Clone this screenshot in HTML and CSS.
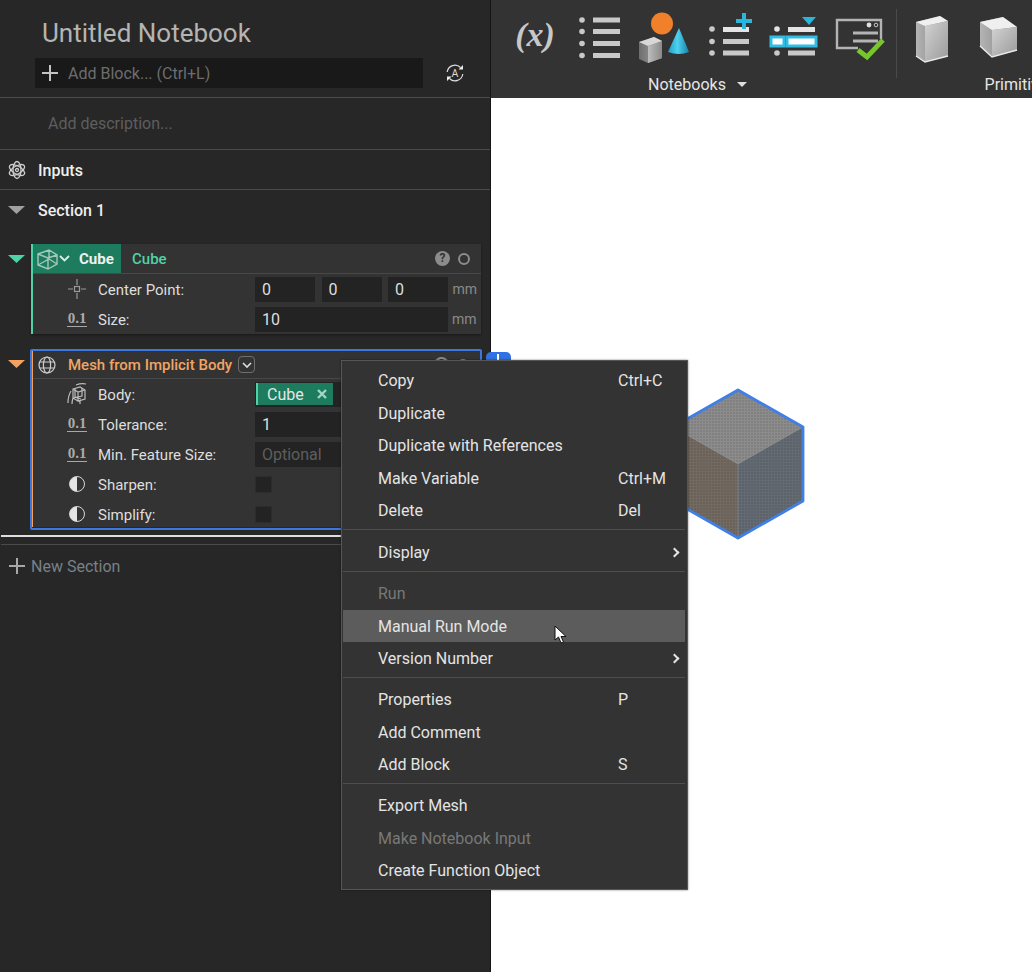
FILE: index.html
```html
<!DOCTYPE html>
<html lang="en">
  <head>
    <meta charset="UTF-8" />
    <meta name="viewport" content="width=device-width, initial-scale=1.0" />
    <title>Untitled Notebook</title>
    <link rel="stylesheet" href="styles.css">
  </head>
  <body>
    <div class="app">
      <aside class="sidebar">
        <header class="nb-header">
          <h1 class="nb-title">Untitled Notebook</h1>
          <div class="add-row">
            <div class="add-bar">
              <svg class="add-plus" width="16" height="16" viewBox="0 0 16 16"><path d="M8 0v16M0 8h16" stroke="#c4c4c4" stroke-width="2"/></svg>
              <span>Add Block... (Ctrl+L)</span>
            </div>
            <svg class="auto-icon" width="20" height="20" viewBox="0 0 20 20" fill="none" stroke="#dcdcdc" stroke-width="1.200">
              <path d="M2.200 9A7.800 7.800 0 0 1 15.500 4.500M17.800 11A7.800 7.800 0 0 1 4.500 15.500"/>
              <path d="M18 2v4.500h-4.500zM2 18v-4.500h4.500z" fill="#eee" stroke="none"/>
              <text x="10" y="14" text-anchor="middle" class="auto-letter">A</text>
            </svg>
          </div>
        </header>
        <div class="nb-desc">Add description...</div>
        <div class="nb-inputs">
          <svg class="inputs-icon" width="18" height="20" viewBox="0 0 18 20" fill="none" stroke="#cfcfcf" stroke-width="1.300">
            <ellipse cx="9" cy="10" rx="8.500" ry="4" transform="rotate(30 9 10)"/>
            <ellipse cx="9" cy="10" rx="8.500" ry="4" transform="rotate(90 9 10)"/>
            <ellipse cx="9" cy="10" rx="8.500" ry="4" transform="rotate(150 9 10)"/>
            <circle cx="9" cy="10" r="1.500"/>
          </svg>
          <span>Inputs</span>
        </div>
        <div class="section-row">
          <span class="tri tri-gray"></span>
          <span>Section 1</span>
        </div>

        <div class="block-wrap cube-wrap">
          <span class="tri tri-teal"></span>
          <div class="block block-cube">
            <div class="block-head">
              <div class="cube-tab">
                <svg width="21" height="22" viewBox="0 0 21 22" fill="none" stroke="#a6c8b9" stroke-width="1.400">
                  <path d="M1 6l11-4 8 5v9l-9 5-10-4zM1 6l10 4 9-3M11 10v11M12 2v9M1 17l11-6 8 5"/>
                </svg>
                <svg class="chev" width="11" height="7" viewBox="0 0 11 7" fill="none" stroke="#e6e6e6" stroke-width="1.800"><path d="M1 1l4.500 4.500L10 1"/></svg>
                <span>Cube</span>
              </div>
              <span class="block-name">Cube</span>
              <div class="head-icons">
                <span class="help">?</span>
                <span class="ring"></span>
              </div>
            </div>
            <div class="row">
              <svg class="row-icon" width="20" height="20" viewBox="0 0 20 20" fill="none" stroke="#9a9a9a" stroke-width="1.200"><rect x="7.500" y="7.500" width="5" height="5"/><path d="M10 0v6M10 14v6M1 10h5M14 10h5"/></svg>
              <label>Center Point:</label>
              <div class="field">0</div>
              <div class="field">0</div>
              <div class="field">0</div>
              <span class="unit">mm</span>
            </div>
            <div class="row">
              <span class="num-icon">0.1</span>
              <label>Size:</label>
              <div class="field field-wide">10</div>
              <span class="unit">mm</span>
            </div>
          </div>
        </div>

        <div class="block-wrap mesh-wrap">
          <span class="tri tri-orange"></span>
          <div class="block-outline">
            <div class="block block-mesh">
              <div class="block-head mesh-head">
                <svg class="globe" width="18" height="18" viewBox="0 0 18 18" fill="none" stroke="#cfcfcf" stroke-width="1.200">
                  <circle cx="9" cy="9" r="8"/>
                  <ellipse cx="9" cy="9" rx="3.600" ry="8"/>
                  <path d="M1.800 6h14.400M1.800 12h14.400"/>
                </svg>
                <span class="mesh-title">Mesh from Implicit Body</span>
                <span class="mesh-toggle">
                  <svg width="10" height="6" viewBox="0 0 10 6" fill="none" stroke="#e0e0e0" stroke-width="1.600"><path d="M1 1l4 4 4-4"/></svg>
                </span>
                <div class="head-icons">
                  <span class="help">?</span>
                  <span class="ring"></span>
                </div>
              </div>
              <div class="row">
                <svg class="row-icon" width="20" height="22" viewBox="0 0 20 22" fill="none" stroke="#bcbcbc" stroke-width="1.200"><path d="M6 6l7-2 5 3v9l-7 2-5-3zM6 6l5 3 7-2M11 9v9M9 2q5-2 10-1M4 8Q1 13 1 20M6 15q-1 3-1 6M13 18v3"/><path d="M8 5v9l6 2M15 5v8l-9 2"/></svg>
                <label>Body:</label>
                <div class="field field-wide">
                  <span class="chip">Cube
                    <svg width="10" height="10" viewBox="0 0 10 10" fill="none" stroke="#9fd8c2" stroke-width="2.400"><path d="M1 1l8 8M9 1l-8 8"/></svg>
                  </span>
                </div>
              </div>
              <div class="row">
                <span class="num-icon">0.1</span>
                <label>Tolerance:</label>
                <div class="field field-wide">1</div>
              </div>
              <div class="row">
                <span class="num-icon">0.1</span>
                <label>Min. Feature Size:</label>
                <div class="field field-wide field-empty">Optional</div>
              </div>
              <div class="row">
                <span class="half-icon"></span>
                <label>Sharpen:</label>
                <span class="check"></span>
              </div>
              <div class="row row-last">
                <span class="half-icon"></span>
                <label>Simplify:</label>
                <span class="check"></span>
              </div>
            </div>
          </div>
          <span class="block-add"><span></span></span>
        </div>

        <div class="end-line"></div>
        <div class="new-section">
          <svg width="16" height="16" viewBox="0 0 16 16"><path d="M8 0v16M0 8h16" stroke="#a8a8a8" stroke-width="2"/></svg>
          <span>New Section</span>
        </div>
      </aside>

      <main class="main">
        <div class="toolbar">
          <div class="tool-group tool-group-notebooks">
            <div class="tool-icons">
              <span class="tool-var">(x)</span>
              <svg width="70" height="64" viewBox="0 0 70 64" fill="#c9c9c9">
                <circle cx="22" cy="12" r="2.800"/><circle cx="22" cy="23.500" r="2.800"/><circle cx="22" cy="35.500" r="2.800"/><circle cx="22" cy="47.500" r="2.800"/>
                <rect x="33" y="9.500" width="27" height="5"/><rect x="33" y="21" width="27" height="5"/><rect x="33" y="33" width="27" height="5"/><rect x="33" y="45" width="27" height="5"/>
              </svg>
              <svg width="65" height="64" viewBox="0 0 65 64">
                <defs>
                  <linearGradient id="coneFill" x1="0" x2="1" y1="0" y2="0"><stop offset="0" stop-color="#1a9fc9"/><stop offset="0.45" stop-color="#4fd0ee"/><stop offset="1" stop-color="#1582aa"/></linearGradient>
                  <linearGradient id="cubeLeft" x1="0" x2="1" y1="0" y2="0"><stop offset="0" stop-color="#6e6e6e"/><stop offset="1" stop-color="#a9a9a9"/></linearGradient>
                  <linearGradient id="cubeRight" x1="0" x2="1" y1="0" y2="0"><stop offset="0" stop-color="#bdbdbd"/><stop offset="1" stop-color="#8a8a8a"/></linearGradient>
                </defs>
                <circle cx="32" cy="15.500" r="11" fill="#f08029"/>
                <path d="M49 20L38 44q11 4 21 0z" fill="url(#coneFill)"/>
                <path d="M9 34l15-5 8 4v17l-14 5-9-4z" fill="url(#cubeLeft)"/>
                <path d="M9 34l15-5 8 4-14 5z" fill="#d8d8d8"/>
                <path d="M18 38l14-5v17l-14 5z" fill="url(#cubeRight)"/>
              </svg>
              <svg width="70" height="64" viewBox="0 0 70 64" fill="#c9c9c9">
                <circle cx="17" cy="21" r="2.800"/><circle cx="17" cy="33.500" r="2.800"/><circle cx="17" cy="45" r="2.800"/>
                <rect x="28" y="19" width="26" height="5" fill="#e4e4e4"/><rect x="28" y="31" width="26" height="5"/><rect x="28" y="42.500" width="26" height="5"/>
                <path d="M49 5v16M41 13h16" stroke="#29b5dc" stroke-width="4"/>
              </svg>
              <svg width="65" height="64" viewBox="0 0 65 64" fill="#c9c9c9">
                <circle cx="12" cy="21" r="2.800" fill="#e4e4e4"/><circle cx="12" cy="45" r="2.800"/>
                <rect x="23" y="19" width="27" height="5" fill="#e4e4e4"/><rect x="23" y="42.500" width="27" height="5"/>
                <rect x="6" y="29" width="13" height="9" fill="#fff" stroke="#2fbde4" stroke-width="3"/>
                <rect x="22" y="29" width="29" height="9" fill="#fff" stroke="#2fbde4" stroke-width="3"/>
                <path d="M37 9h14l-7 8z" fill="#29b5dc"/>
              </svg>
              <svg width="66" height="64" viewBox="0 0 66 64" fill="none">
                <path d="M28 40H7V12h44v19" stroke="#b4b4b4" stroke-width="2.400"/>
                <circle cx="39" cy="17" r="2.400" fill="#e0e0e0"/><circle cx="46" cy="17" r="1.800" stroke="#c8c8c8"/>
                <path d="M23 25h25M23 33h25" stroke="#b4b4b4" stroke-width="3"/>
                <path d="M28 42l9 7 16-17" stroke="#77c62c" stroke-width="4.800"/>
              </svg>
            </div>
            <div class="tool-label">Notebooks <span class="caret"></span></div>
          </div>
          <div class="tool-group tool-group-primitives">
            <div class="tool-icons">
              <svg width="68" height="64" viewBox="0 0 68 64">
                <defs>
                  <linearGradient id="boxFront" x1="0" x2="1" y1="0" y2="1"><stop offset="0" stop-color="#d2d2d2"/><stop offset="1" stop-color="#9a9a9a"/></linearGradient>
                  <linearGradient id="boxSide" x1="0" x2="1" y1="0" y2="0"><stop offset="0" stop-color="#b4b4b4"/><stop offset="1" stop-color="#7a7a7a"/></linearGradient>
                </defs>
                <path d="M20 14l24-6 8 5v35l-23 6-9-6z" fill="url(#boxSide)"/>
                <path d="M20 14l24-6 8 5-23 5z" fill="#efefef"/>
                <path d="M29 18l23-5v35l-23 6z" fill="url(#boxFront)"/>
                <path d="M20 48l9 6 23-6" fill="none" stroke="#e8e8e8" stroke-width="1.500"/>
              </svg>
              <svg width="68" height="64" viewBox="0 0 68 64">
                <path d="M16 14l23-5 14 10v23l-25 7-12-11z" fill="url(#boxSide)"/>
                <path d="M16 14l23-5 14 10-25 3z" fill="#efefef"/>
                <path d="M28 22l25-3v23l-25 7z" fill="url(#boxFront)"/>
                <path d="M16 38l12 11 25-7" fill="none" stroke="#e8e8e8" stroke-width="1.500"/>
              </svg>
            </div>
            <div class="tool-label">Primitives <span class="caret"></span></div>
          </div>
        </div>

        <div class="viewport">
          <svg class="mesh-cube" width="140" height="158" viewBox="0 0 140 158">
            <defs>
              <pattern id="meshDots" width="3" height="3" patternUnits="userSpaceOnUse">
                <circle cx="1" cy="1" r="0.800" fill="#000" fill-opacity="0.180"/>
              </pattern>
            </defs>
            <path d="M68 5l65 37v74l-65 37-65-37V42z" fill="#8c8c8c"/>
            <path d="M3 42l65 37v74L3 116z" fill="#736b62"/>
            <path d="M133 42L68 79v74l65-37z" fill="#646b73"/>
            <path d="M68 5l65 37v74l-65 37-65-37V42z" fill="url(#meshDots)"/>
            <path d="M3 42l65 37 65-37M68 79v74" fill="none" stroke="#a8a8a8" stroke-opacity="0.400" stroke-width="1"/>
            <path d="M68 5l65 37v74l-65 37-65-37V42z" fill="none" stroke="#3f7fe6" stroke-width="2.800" stroke-linejoin="round"/>
          </svg>
        </div>
      </main>
    </div>

    <!-- Context menu -->
    <div class="menu">
      <div class="menu-item"><span class="menu-text">Copy</span><span>Ctrl+C</span></div>
      <div class="menu-item"><span class="menu-text">Duplicate</span></div>
      <div class="menu-item"><span class="menu-text">Duplicate with References</span></div>
      <div class="menu-item"><span class="menu-text">Make Variable</span><span>Ctrl+M</span></div>
      <div class="menu-item"><span class="menu-text">Delete</span><span>Del</span></div>
      <div class="menu-sep menu-sep-first"></div>
      <div class="menu-item menu-sub"><span class="menu-text">Display</span></div>
      <div class="menu-sep"></div>
      <div class="menu-item menu-off"><span class="menu-text">Run</span></div>
      <div class="menu-item menu-hover">
        <span class="menu-text">Manual Run Mode</span>
        <svg class="pointer" width="14" height="19" viewBox="0 0 14 19"><path d="M1 1v14l3.500-3 2.500 6 2.500-1-2.500-5.500H12z" fill="#fff" stroke="#111" stroke-width="1"/></svg>
      </div>
      <div class="menu-item menu-sub"><span class="menu-text">Version Number</span></div>
      <div class="menu-sep"></div>
      <div class="menu-item"><span class="menu-text">Properties</span><span>P</span></div>
      <div class="menu-item"><span class="menu-text">Add Comment</span></div>
      <div class="menu-item"><span class="menu-text">Add Block</span><span>S</span></div>
      <div class="menu-sep"></div>
      <div class="menu-item"><span class="menu-text">Export Mesh</span></div>
      <div class="menu-item menu-off"><span class="menu-text">Make Notebook Input</span></div>
      <div class="menu-item"><span class="menu-text">Create Function Object</span></div>
    </div>
  </body>
</html>
```

FILE: styles.css
```css
* {
  box-sizing: border-box;
}

html, body {
  margin: 0;
  height: 100%;
  overflow: hidden;
}

body {
  font-family: Roboto, "Liberation Sans", sans-serif;
  font-size: 16px;
  color: #e2e2e2;
  background-color: #fff;
}

.app {
  display: flex;
  height: 972px;
}

/* Left notebook panel */
.sidebar {
  width: 491px;
  flex-shrink: 0;
  background-color: #272727;
  border-right: 1px solid #141414;
}

.nb-header {
  height: 98px;
  padding: 18px 0 0 35px;
  border-bottom: 1px solid #4b4b4b;
}

.nb-title {
  margin: 0 0 10px 7px;
  font-size: 26px;
  line-height: 30px;
  font-weight: 400;
  color: #b4b4b4;
}

.add-row {
  display: flex;
  align-items: center;
}

.add-bar {
  display: flex;
  align-items: center;
  width: 388px;
  height: 30px;
  padding-left: 7px;
  background-color: #191919;
  color: #6d6d6d;
}

.add-plus {
  margin-right: 10px;
}

.auto-icon {
  margin-left: 22px;
}

.auto-letter {
  font-family: Roboto, sans-serif;
  font-size: 10.500px;
  fill: #dcdcdc;
  stroke: none;
}

.nb-desc {
  height: 52px;
  padding: 16px 0 0 48px;
  line-height: 20px;
  color: #5e5e5e;
  border-bottom: 1px solid #4b4b4b;
}

.nb-inputs {
  display: flex;
  align-items: center;
  height: 40px;
  padding-left: 8px;
  font-weight: 500;
  color: #eee;
  border-bottom: 1px solid #4b4b4b;
}

.nb-inputs span {
  margin-left: 12px;
  padding-top: 1px;
}

.section-row {
  display: flex;
  align-items: center;
  height: 40px;
  padding-left: 8px;
  font-weight: 500;
  color: #eee;
}

.section-row span:last-child {
  margin-left: 13px;
}

.tri {
  display: block;
  flex-shrink: 0;
  width: 17px;
  height: 8px;
  background-color: #a0a0a0;
  clip-path: polygon(0 0, 100% 0, 50% 100%);
}

.tri-teal {
  margin-top: 11px;
  background-color: #4fd2a6;
}

.tri-orange {
  margin-top: 11px;
  background-color: #f5a260;
}

/* Blocks */
.block-wrap {
  position: relative;
  display: flex;
  padding-left: 8px;
}

.cube-wrap {
  margin-top: 14px;
}

.mesh-wrap {
  margin-top: 15px;
}

.block {
  background-color: #333;
}

.block-cube {
  width: 450px;
  margin-left: 6px;
  border-left: 2px solid #4fd2a6;
  box-shadow: 0 1px 2px rgba(0, 0, 0, 0.4);
}

.block-outline {
  width: 452px;
  height: 181px;
  margin-left: 5px;
  border: 2px solid #3a78e0;
  border-radius: 2px;
}

.block-mesh {
  margin-left: 0;
  border-left: 1px solid #f5a260;
}

.block-head {
  display: flex;
  align-items: center;
  height: 30px;
  border-bottom: 1px solid #484848;
}

.mesh-head {
  height: 28px;
}

.cube-tab {
  display: flex;
  align-items: center;
  width: 88px;
  height: 29px;
  padding-left: 4px;
  background-color: #1d7c5e;
  font-size: 15px;
  font-weight: 700;
  color: #f0f0f0;
}

.cube-tab span,
.block-name {
  padding-top: 1px;
}

.chev {
  margin-left: 1px;
  margin-right: 9px;
}

.block-name {
  margin-left: 11px;
  font-size: 15px;
  font-weight: 500;
  color: #4fd2a6;
}

.head-icons {
  display: flex;
  align-items: center;
  gap: 8px;
  margin-left: auto;
  padding-right: 11px;
}

.help {
  width: 15px;
  height: 15px;
  border-radius: 50%;
  background-color: #8c8c8c;
  color: #333;
  font-size: 12px;
  font-weight: 700;
  line-height: 15px;
  text-align: center;
}

.ring {
  width: 12px;
  height: 12px;
  border: 2px solid #8c8c8c;
  border-radius: 50%;
}

.globe {
  margin-left: 5px;
  margin-right: 12px;
}

.mesh-title {
  font-size: 15px;
  font-weight: 500;
  color: #f0a564;
}

.mesh-toggle {
  display: flex;
  align-items: center;
  justify-content: center;
  width: 17px;
  height: 17px;
  margin-left: 6px;
  border: 1px solid #707070;
  border-radius: 4px;
}

.row {
  display: flex;
  align-items: center;
  height: 30px;
  padding-left: 34px;
}

.row-last {
  height: 28px;
  padding-top: 2px;
}

.row label {
  width: 157px;
  margin-left: 11px;
  padding-top: 1px;
  font-size: 15px;
  color: #dedede;
}

.row-icon {
  flex-shrink: 0;
}

.num-icon {
  width: 20px;
  border-bottom: 1px solid #a8a8a8;
  font-family: "Liberation Serif", serif;
  font-size: 15px;
  font-weight: 700;
  line-height: 15px;
  text-align: center;
  color: #aaa;
}

.half-icon {
  width: 16px;
  height: 16px;
  margin: 0 2px;
  border: 1px solid #d8d8d8;
  border-radius: 50%;
  background: linear-gradient(90deg, #e4e4e4 50%, #333 50%);
}

.field {
  display: flex;
  align-items: center;
  width: 60px;
  height: 25px;
  margin-right: 6.500px;
  padding-left: 7px;
  background-color: #232323;
  color: #dedede;
}

.field-wide {
  width: 193px;
  margin-right: 0;
}

.field-empty {
  color: #5e5e5e;
}

.unit {
  margin-left: -2px;
  font-size: 14px;
  color: #8a8a8a;
}

.field-wide + .unit {
  margin-left: 4px;
}

.chip {
  display: flex;
  align-items: center;
  justify-content: space-between;
  width: 77px;
  height: 22px;
  margin-left: -6px;
  padding: 0 6px 0 9px;
  background-color: #1d7c5e;
  border-left: 2px solid #4fd2a6;
  color: #e6e6e6;
}

.check {
  width: 17px;
  height: 17px;
  background-color: #232323;
  border: 1px solid #2c2c2c;
}

.block-add {
  position: absolute;
  z-index: 1;
  left: 486px;
  top: 3px;
  width: 25px;
  height: 24px;
  border-radius: 5px;
  background-color: #2f72e6;
}

.block-add span {
  position: absolute;
  left: 11px;
  top: 2px;
  width: 2px;
  height: 12px;
  background-color: #fff;
}

.end-line {
  height: 10px;
  margin: 5px 0 0 1px;
  border-top: 2px solid #dedede;
  border-bottom: 1px solid #4b4b4b;
}

.new-section {
  display: flex;
  align-items: center;
  gap: 6px;
  height: 42px;
  padding-left: 9px;
  color: #77818a;
}

/* Ribbon */
.main {
  flex: 1;
  min-width: 0;
  display: flex;
  flex-direction: column;
}

.toolbar {
  display: flex;
  height: 98px;
  overflow: hidden;
  background-color: #333;
}

.tool-group {
  position: relative;
  display: flex;
  flex-direction: column;
  flex-shrink: 0;
  padding-top: 8px;
}

.tool-group-notebooks {
  width: 405px;
  padding-left: 19px;
}

.tool-group-notebooks .tool-label {
  padding-right: 11px;
}

.tool-group-primitives {
  width: 269px;
}

.tool-group-primitives::before {
  content: "";
  position: absolute;
  left: 0;
  top: 9px;
  width: 1px;
  height: 69px;
  background-color: #4a4a4a;
}

.tool-icons {
  display: flex;
  height: 64px;
}

.tool-icons svg {
  flex-shrink: 0;
}

.tool-var {
  width: 50px;
  font-family: "Liberation Serif", serif;
  font-size: 34px;
  font-style: italic;
  font-weight: 700;
  line-height: 54px;
  text-align: center;
  color: #c8c8c8;
}

.tool-label {
  margin-top: 4px;
  line-height: 18px;
  text-align: center;
  color: #e6e6e6;
}

.caret {
  display: inline-block;
  width: 0;
  height: 0;
  margin-left: 7px;
  vertical-align: 3px;
  border-left: 5px solid transparent;
  border-right: 5px solid transparent;
  border-top: 5px solid #e0e0e0;
}

.viewport {
  position: relative;
  flex: 1;
  background-color: #fff;
}

.mesh-cube {
  position: absolute;
  left: 179px;
  top: 287px;
}

/* Context menu */
.menu {
  position: absolute;
  z-index: 2;
  left: 341px;
  top: 360px;
  width: 347px;
  height: 530px;
  padding: 3.400px 2px 3px 1px;
  background-color: #333;
  border: 1px solid #565656;
  box-shadow: 0 0 2px rgba(0, 0, 0, 0.5);
}

.menu-item {
  position: relative;
  display: flex;
  align-items: center;
  height: 32.500px;
  padding-left: 35px;
  color: #e4e4e4;
}

.menu-text {
  width: 240px;
}

.menu-off {
  color: #787878;
}

.menu-hover {
  background-color: #5c5c5c;
}

.pointer {
  position: absolute;
  left: 211px;
  top: 15px;
}

.menu-sub::after {
  content: "";
  position: absolute;
  right: 7px;
  top: 13px;
  width: 5px;
  height: 5px;
  border-top: 2px solid #e4e4e4;
  border-right: 2px solid #e4e4e4;
  transform: rotate(45deg);
}

.menu-sep {
  height: 1px;
  margin: 2.500px 0 5px;
  background-color: #4e4e4e;
}

.menu-sep-first {
  margin-bottom: 6px;
}
```
